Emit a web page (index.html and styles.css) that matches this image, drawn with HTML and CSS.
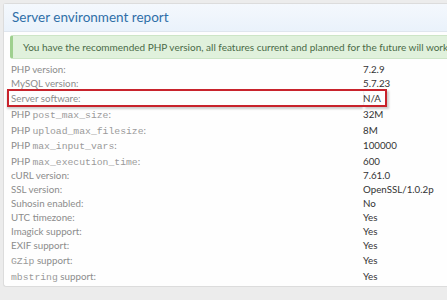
FILE: index.html
```html
<!DOCTYPE html>
<html lang="en">
<head>
    <meta charset="UTF-8">
    <title>Server environment report</title>
    <link rel="stylesheet" href="styles.css">
</head>
<body>
    <div class="block">
        <h2 class="block-header">Server environment report</h2>
        <div class="block-body">
            <div class="notice">You have the recommended PHP version, all features current and planned for the future will work correctly.</div>

            <dl class="pairs">
                <dt>PHP version:</dt><dd>7.2.9</dd>
                <dt>MySQL version:</dt><dd>5.7.23</dd>
                <dt class="flagged">Server software:</dt><dd class="flagged">N/A</dd>
                <dt class="mono-row">PHP <code>post_max_size</code>:</dt><dd class="mono-row">32M</dd>
                <dt class="mono-row">PHP <code>upload_max_filesize</code>:</dt><dd class="mono-row">8M</dd>
                <dt class="mono-row">PHP <code>max_input_vars</code>:</dt><dd class="mono-row">100000</dd>
                <dt class="mono-row">PHP <code>max_execution_time</code>:</dt><dd class="mono-row">600</dd>
                <dt>cURL version:</dt><dd>7.61.0</dd>
                <dt>SSL version:</dt><dd>OpenSSL/1.0.2p</dd>
                <dt>Suhosin enabled:</dt><dd>No</dd>
                <dt>UTC timezone:</dt><dd>Yes</dd>
                <dt>Imagick support:</dt><dd>Yes</dd>
                <dt>EXIF support:</dt><dd>Yes</dd>
                <dt class="mono-row"><code>GZip</code> support:</dt><dd class="mono-row">Yes</dd>
                <dt class="mono-row"><code>mbstring</code> support:</dt><dd class="mono-row">Yes</dd>
            </dl>
        </div>
    </div>
</body>
</html>
```

FILE: styles.css
```css
body {
    margin: 0;
    padding: 3px 0 0 3px;
    background-color: #ececec;
    font-family: 'Lato', 'Open Sans', sans-serif;
    overflow: hidden;
}

.block {
    width: 460px;
    background-color: #fefefe;
    border: 1px solid #dcdcdc;
    border-right: none;
    border-radius: 3px 0 0 3px;
    height: 284px;
    box-sizing: border-box;
}

.block-header {
    margin: 0;
    height: 28px;
    padding: 5px 0 0 8px;
    box-sizing: border-box;
    font-size: 13.5px;
    font-weight: normal;
    color: #2f6fa8;
    background: linear-gradient(to bottom, #f4f8fd, #eaf2fb);
    border-bottom: 1px solid #dfe6ee;
    white-space: nowrap;
}

.block-body {
    padding: 3px 0 0 6px;
}

/* Green success notice */
.notice {
    height: 22px;
    line-height: 22px;
    padding-left: 10px;
    font-size: 10px;
    color: #4a6b47;
    background-color: #e0f1dc;
    border: 1px solid #cde5c7;
    border-left: 3px solid #9fd08f;
    border-right: none;
    border-radius: 3px 0 0 3px;
    white-space: nowrap;
    overflow: hidden;
}

.pairs {
    display: grid;
    grid-template-columns: 353px auto;
    margin: 3px 0 0 0;
    font-size: 9.75px;
    line-height: 14px;
}

.pairs dt {
    color: #8c8c8c;
    padding-left: 1px;
    white-space: nowrap;
}

.pairs dd {
    margin: 0;
    color: #333;
}

.pairs .mono-row {
    height: 15.5px;
    line-height: 16px;
}

.pairs code {
    font-family: 'Liberation Mono', monospace;
    font-size: 9.75px;
    line-height: 1;
    color: #9a9a9a;
}

/* Red highlight box drawn around the server software row */
.pairs dt.flagged {
    border: 2px solid #c8232c;
    border-right: none;
    margin: -1px 0 -1px -3px;
    padding-left: 2px;
    box-shadow: 0 2px 2px rgba(0, 0, 0, 0.2);
}

.pairs dd.flagged {
    border: 2px solid #c8232c;
    border-left: none;
    margin: -1px 0 -1px 0;
    width: 22px;
    box-shadow: 2px 2px 2px rgba(0, 0, 0, 0.2);
}
```
